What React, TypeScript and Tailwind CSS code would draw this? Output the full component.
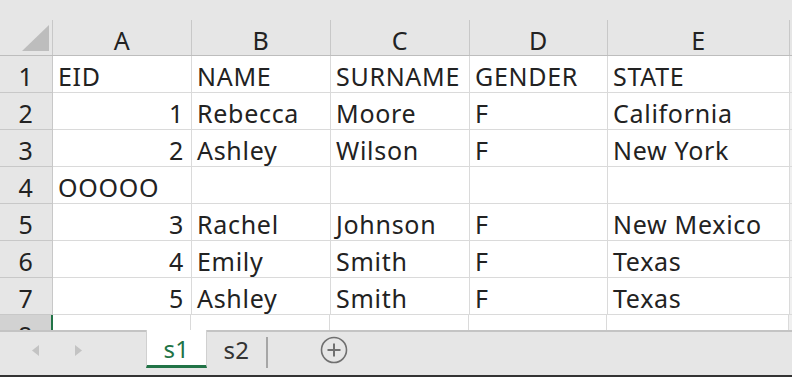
const cols = [
  { key: 'A', w: 'w-[139px]' },
  { key: 'B', w: 'w-[139px]' },
  { key: 'C', w: 'w-[139px]' },
  { key: 'D', w: 'w-[138px]' },
  { key: 'E', w: 'w-[182px]' },
]

type Cell = { v: string; num?: boolean }

const rows: Cell[][] = [
  [{ v: 'EID' }, { v: 'NAME' }, { v: 'SURNAME' }, { v: 'GENDER' }, { v: 'STATE' }],
  [{ v: '1', num: true }, { v: 'Rebecca' }, { v: 'Moore' }, { v: 'F' }, { v: 'California' }],
  [{ v: '2', num: true }, { v: 'Ashley' }, { v: 'Wilson' }, { v: 'F' }, { v: 'New York' }],
  [{ v: 'OOOOO' }, { v: '' }, { v: '' }, { v: '' }, { v: '' }],
  [{ v: '3', num: true }, { v: 'Rachel' }, { v: 'Johnson' }, { v: 'F' }, { v: 'New Mexico' }],
  [{ v: '4', num: true }, { v: 'Emily' }, { v: 'Smith' }, { v: 'F' }, { v: 'Texas' }],
  [{ v: '5', num: true }, { v: 'Ashley' }, { v: 'Smith' }, { v: 'F' }, { v: 'Texas' }],
]

const font = { fontFamily: '"Noto Sans", "Liberation Sans", sans-serif' }

export default function App() {
  return (
    <div className="flex h-[377px] w-[792px] flex-col overflow-hidden bg-white text-[25px] tracking-[0.7px] text-[#222]" style={font}>
      {/* Sheet */}
      <div className="h-[330px] overflow-hidden">
        {/* Column headers */}
        <div className="flex h-[56px] items-end border-b border-[#bdbdbd] bg-[#e6e6e6]">
          <div className="relative h-[35px] w-[53px] shrink-0 border-r border-[#c8c8c8]">
            <svg className="absolute left-[22px] top-[5px]" width="27" height="26" viewBox="0 0 27 26">
              <polygon points="27,0 27,26 0,26" fill="#bdbdbd" />
            </svg>
          </div>
          {cols.map((c) => (
            <div
              key={c.key}
              className={`${c.w} h-[35px] shrink-0 border-r border-[#c8c8c8] pt-[5px] text-center leading-[30px]`}
            >
              {c.key}
            </div>
          ))}
          <div className="h-[35px] grow" />
        </div>

        {/* Data rows */}
        {rows.map((r, i) => (
          <div key={i} className="flex h-[37px]">
            <div className="h-full w-[53px] shrink-0 border-r border-b border-[#c8c8c8] bg-[#e6e6e6] pt-[5px] text-center leading-[30px]">
              {i + 1}
            </div>
            {r.map((cell, j) => (
              <div
                key={j}
                className={`${cols[j].w} h-full shrink-0 whitespace-nowrap border-r border-b border-[#dadada] pt-[5px] leading-[30px] ${
                  cell.num ? 'pr-[7px] text-right' : 'pl-[5px]'
                }`}
              >
                {cell.v}
              </div>
            ))}
            <div className="h-full grow border-b border-[#dadada] bg-[#f0f0f0]" />
          </div>
        ))}

        {/* Row 8, mostly under the tab bar */}
        <div className="flex h-[15px]">
          <div className="h-[37px] w-[51px] shrink-0 overflow-hidden bg-[#d2d2d2] pt-[5px] text-center leading-[30px]">8</div>
          <div className="h-full w-[2px] shrink-0 bg-[#217346]" />
          <div className="h-full w-[138px] shrink-0 border-r border-[#dadada]" />
          {cols.slice(1).map((c) => (
            <div key={c.key} className={`${c.w} h-full shrink-0 border-r border-[#dadada]`} />
          ))}
          <div className="h-full grow bg-[#f0f0f0]" />
        </div>
      </div>

      {/* Sheet tabs */}
      <div className="flex h-[47px] items-start border-t-2 border-b-2 border-t-[#c4c4c4] border-b-[#333] bg-[#e6e6e6] text-[24px] tracking-[0.5px]">
        <div className="flex h-[36px] w-[146px] shrink-0 items-center">
          <svg className="ml-[32px]" width="7" height="11" viewBox="0 0 7 11">
            <polygon points="7,0 7,11 0,5.5" fill="#c3c3c3" />
          </svg>
          <svg className="ml-[36px]" width="7" height="11" viewBox="0 0 7 11">
            <polygon points="0,0 0,11 7,5.5" fill="#c3c3c3" />
          </svg>
        </div>
        <div className="-mt-[2px] flex h-[38px] w-[61px] shrink-0 items-center justify-center border-x border-b-[3px] border-x-[#d0d0d0] border-b-[#217346] bg-white pt-[2px] text-[#217346]">
          s1
        </div>
        <div className="flex h-[36px] w-[59px] shrink-0 items-center justify-center text-[#333]">s2</div>
        <div className="mt-[5px] h-[31px] w-[2px] shrink-0 bg-[#a6a6a6]" />
        <div className="flex h-[36px] w-[130px] shrink-0 items-center pl-[52px]">
          <svg width="28" height="28" viewBox="0 0 28 28" fill="none" stroke="#707070" strokeWidth="1.6">
            <circle cx="14" cy="14" r="12.5" />
            <path d="M14 7.5v13M7.5 14h13" strokeWidth="2" />
          </svg>
        </div>
      </div>
    </div>
  )
}
